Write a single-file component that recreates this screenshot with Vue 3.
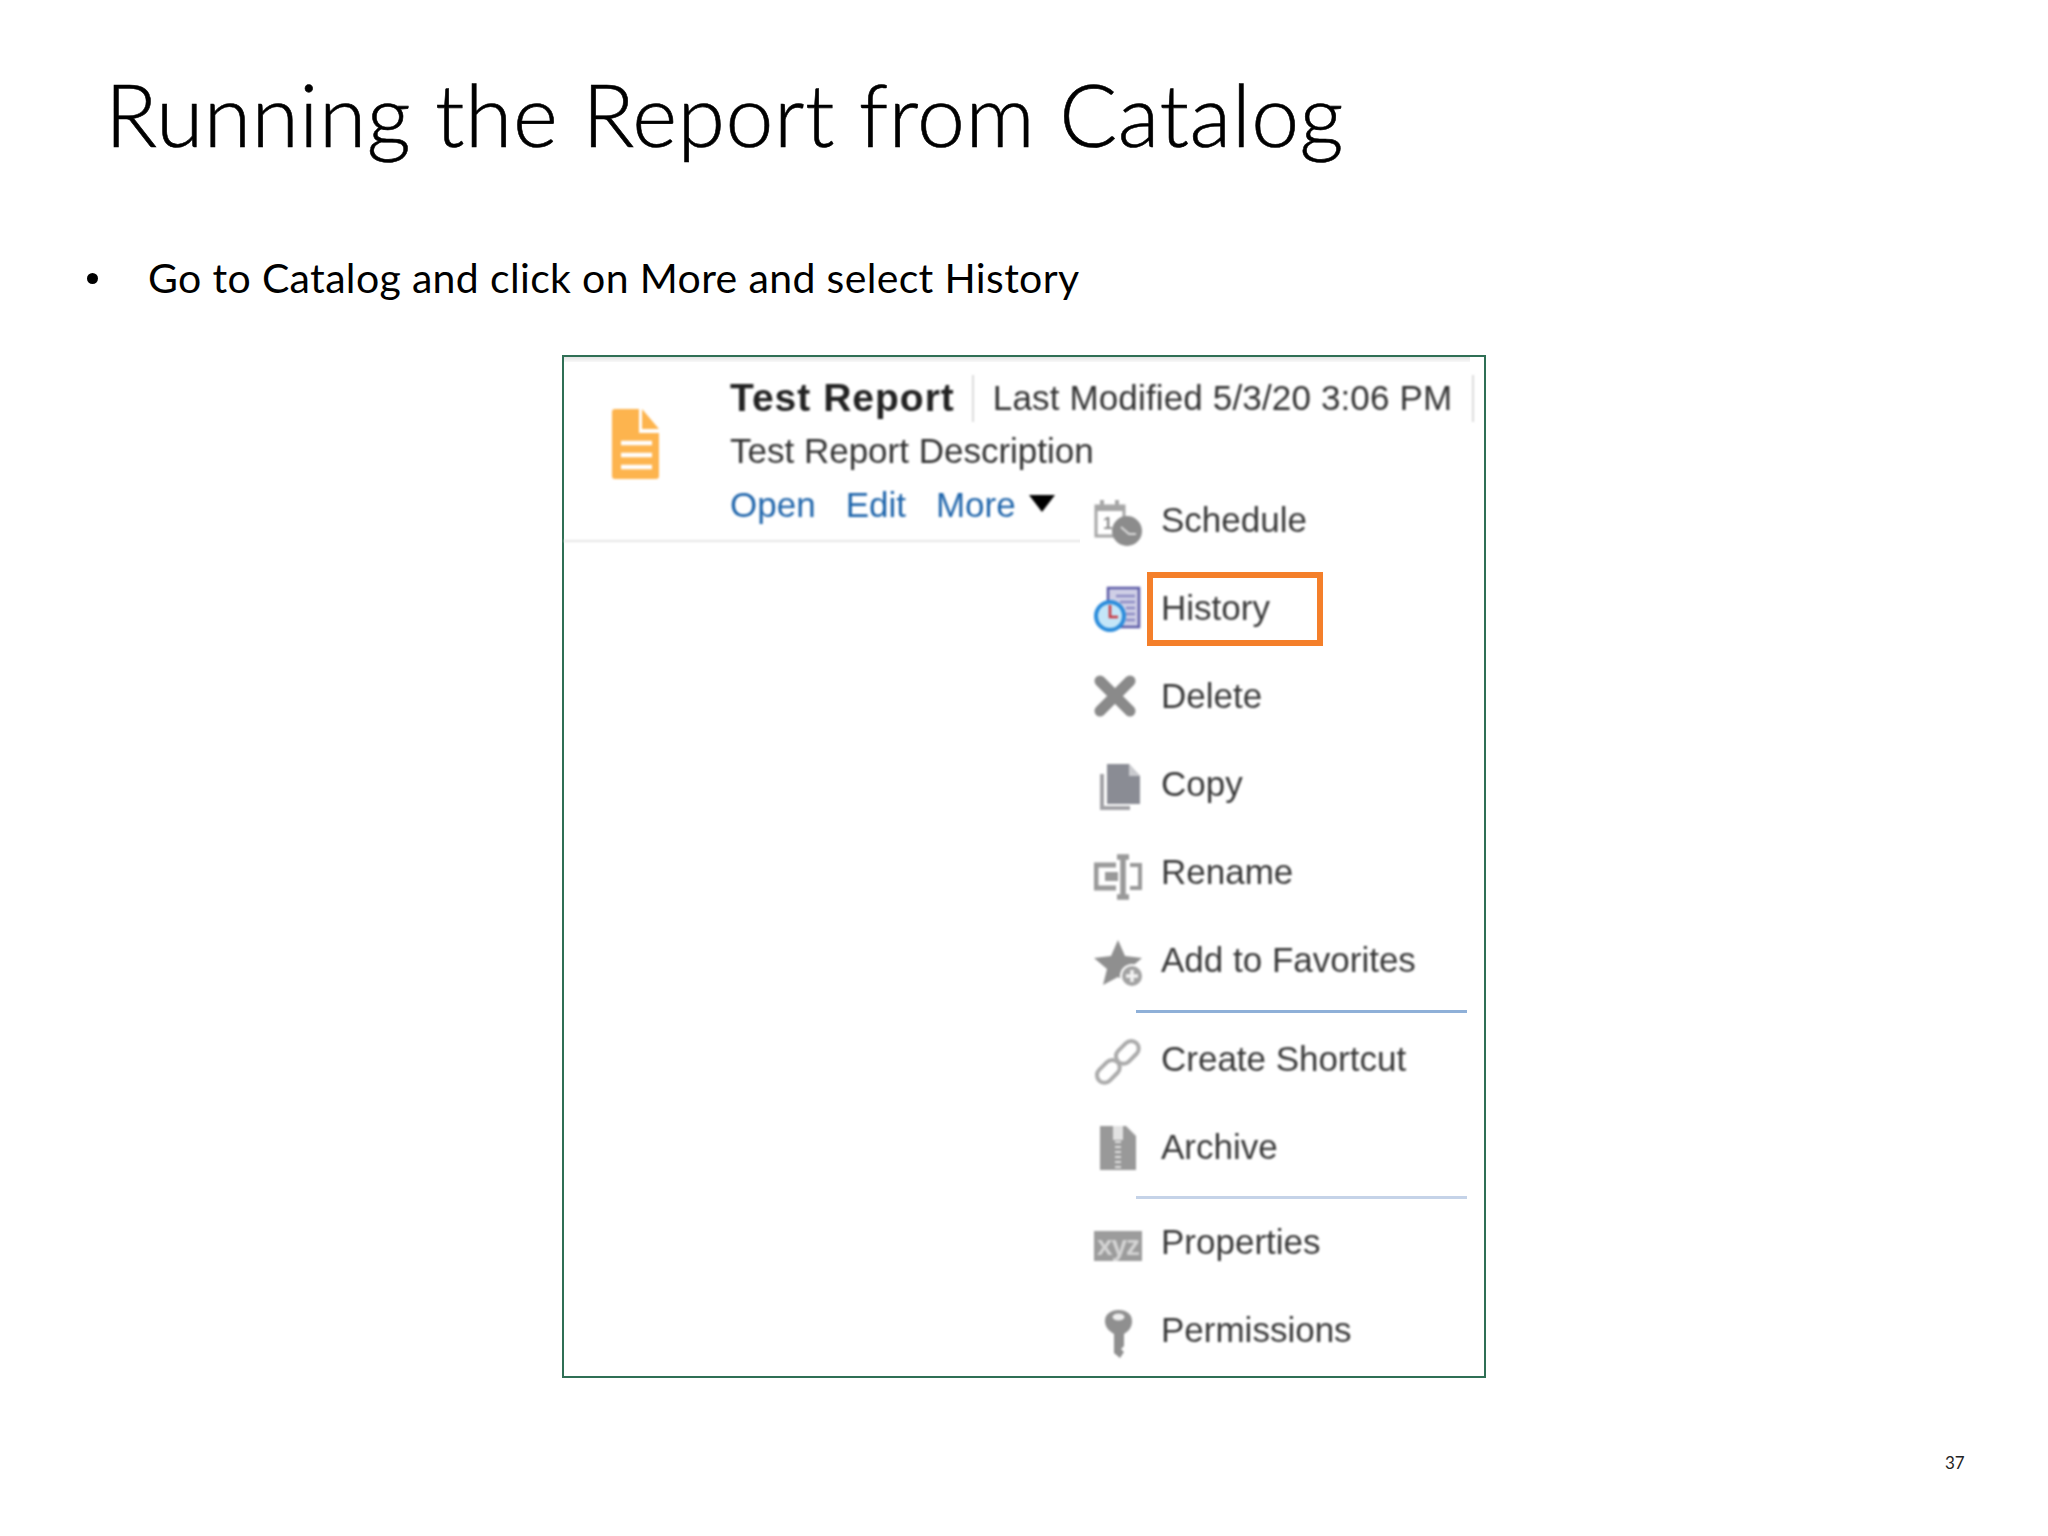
<script setup>
const actions = ['Open', 'Edit', 'More']
</script>

<template>
  <div class="slide">
    <h1 class="title">Running the Report from Catalog</h1>

    <ul class="bullets">
      <li>Go to Catalog and click on More and select History</li>
    </ul>

    <div class="shot">
      <div class="shot-inner">
        <div class="top-shade"></div>

        <div class="report">
          <svg class="doc-icon" viewBox="0 0 47 70">
            <path d="M3 0H27V24H47V67a3 3 0 0 1-3 3H3a3 3 0 0 1-3-3V3a3 3 0 0 1 3-3z" fill="#fdb44e" />
            <path d="M30 0 47 20H30z" fill="#fdb44e" />
            <path d="M9 34H40M9 46H40M9 58H40" stroke="#fff" stroke-width="4.5" />
          </svg>
          <div class="report-text">
            <div class="report-head">
              <span class="report-name">Test Report</span>
              <span class="report-sep"></span>
              <span class="report-date">Last Modified 5/3/20 3:06 PM</span>
              <span class="report-sep end"></span>
            </div>
            <div class="report-desc">Test Report Description</div>
            <div class="report-links">
              <a v-for="a in actions" :key="a">{{ a }}</a>
              <svg class="caret" viewBox="0 0 26 17"><path d="M0 0H26L13 17z" fill="#000" /></svg>
            </div>
          </div>
        </div>

        <!-- open "More" menu, sits over the divider line -->
        <div class="menu">
          <div class="menu-row">
            <svg class="ico" viewBox="0 0 48 56">
              <path d="M2 14H30V44H2z" fill="#fff" stroke="#a6a6a6" stroke-width="3" />
              <path d="M2 14H30V19H2z" fill="#a6a6a6" />
              <path d="M8 8V17M23 8V17" stroke="#a6a6a6" stroke-width="4" />
              <text x="9" y="37" class="ico-num">1</text>
              <circle cx="33" cy="39" r="15" fill="#8c8c8c" />
              <path d="M27 35 35 42H42" fill="none" stroke="#dcdcdc" stroke-width="2" />
            </svg>
            <span>Schedule</span>
          </div>

          <div class="menu-row">
            <svg class="ico" viewBox="0 0 48 56">
              <path d="M14 8H45V47H14z" fill="#cfcfe6" stroke="#5b5aa6" stroke-width="2.5" />
              <path d="M22 16H41M26 22H41M32 28H41M32 34H41M32 40H41" stroke="#8d8cc4" stroke-width="2.5" />
              <circle cx="16" cy="36" r="14" fill="#c4e6f8" stroke="#2b8cdb" stroke-width="4" />
              <path d="M16 25V37H24" fill="none" stroke="#c8343c" stroke-width="2.5" />
            </svg>
            <span>History</span>
            <div class="highlight"></div>
          </div>

          <div class="menu-row">
            <svg class="ico" viewBox="0 0 48 56">
              <path d="M6 13 36 43M36 13 6 43" stroke="#8a8a8a" stroke-width="11" stroke-linecap="round" />
            </svg>
            <span>Delete</span>
          </div>

          <div class="menu-row">
            <svg class="ico" viewBox="0 0 48 56">
              <path d="M8 18V52H36" fill="none" stroke="#a2a2a6" stroke-width="4" />
              <path d="M13 8H35L46 20V48H13z" fill="#8a8c94" />
              <path d="M35 8 46 20H35z" fill="#c9cace" />
            </svg>
            <span>Copy</span>
          </div>

          <div class="menu-row">
            <svg class="ico" viewBox="0 0 48 56">
              <path d="M22 21H2V44H22" fill="none" stroke="#999" stroke-width="5" />
              <path d="M11 28H24V37H11z" fill="#999" />
              <path d="M36 21H46V44H36" fill="none" stroke="#999" stroke-width="4" />
              <path d="M29 13V53M23 13H35M23 53H35" stroke="#999" stroke-width="5.5" />
            </svg>
            <span>Rename</span>
          </div>

          <div class="menu-row">
            <svg class="ico" viewBox="0 0 48 56">
              <path d="M24 8 31 24 48 26 35 37 39 54 24 45 9 53 13 37 0 26 17 24z" fill="#8f8f8f" />
              <circle cx="38" cy="44" r="11" fill="#a2a2a2" stroke="#fff" stroke-width="2" />
              <path d="M38 38V50M32 44H44" stroke="#f2f2f2" stroke-width="3.5" />
            </svg>
            <span>Add to Favorites</span>
          </div>

          <div class="menu-sep first"></div>

          <div class="menu-row">
            <svg class="ico" viewBox="0 0 48 56">
              <g fill="none" stroke="#ababab" stroke-width="4">
                <rect x="1" y="33" width="26" height="15" rx="7.5" transform="rotate(-45 14 40)" />
                <rect x="20" y="14" width="26" height="15" rx="7.5" transform="rotate(-45 33 21)" />
              </g>
            </svg>
            <span>Create Shortcut</span>
          </div>

          <div class="menu-row">
            <svg class="ico" viewBox="0 0 48 56">
              <path d="M6 7H32L42 17V51H6z" fill="#999" />
              <path d="M19 7H29V21H19z" fill="#e2e2e2" />
              <path d="M24 22V51" stroke="#e2e2e2" stroke-width="6" stroke-dasharray="2 3" />
            </svg>
            <span>Archive</span>
          </div>

          <div class="menu-sep second"></div>

          <div class="menu-row">
            <svg class="ico" viewBox="0 0 48 56">
              <rect y="17" width="48" height="30" fill="#9c9c9c" />
              <text x="24" y="41" text-anchor="middle" class="ico-xyz">xyz</text>
            </svg>
            <span>Properties</span>
          </div>

          <div class="menu-row">
            <svg class="ico" viewBox="0 0 48 56">
              <path d="M24.5 8c8 0 13.5 4 13.5 11 0 6-3 10-8 13V44L27 47 30 50 26 56 20 51V32C15 29 11 25 11 19 11 12 17 8 24.5 8z" fill="#8f8f8f" />
              <ellipse cx="24.5" cy="15" rx="6" ry="3.5" fill="#eee" />
            </svg>
            <span>Permissions</span>
          </div>
        </div>
      </div>
    </div>

    <div class="page-num">37</div>
  </div>
</template>

<style scoped>
.slide {
  width: 2048px;
  height: 1536px;
  box-sizing: border-box;
  display: flex;
  flex-direction: column;
  background: #fff;
  color: #000;
  font-family: Lato, "Open Sans", sans-serif;
  overflow: hidden;
}

.title {
  margin: 64px 0 0 105px;
  font-size: 86px;
  letter-spacing: 0.52px;
  line-height: 100px;
  font-weight: 300;
  -webkit-text-stroke: 0.6px #000;
}

.bullets {
  list-style: none;
  margin: 89px 0 0;
  padding: 0 0 0 148px;
  font-size: 41px;
  letter-spacing: 0.35px;
  line-height: 50px;
  position: relative;
}

.bullets li::before {
  content: "";
  position: absolute;
  left: 87px;
  top: 20px;
  width: 11px;
  height: 11px;
  border-radius: 50%;
  background: #000;
}

.shot {
  margin: 52px 0 0 562px;
  width: 924px;
  height: 1023px;
  box-sizing: border-box;
  border: 2px solid #2f6f55;
  flex: none;
}

.shot-inner {
  position: relative;
  height: 100%;
  font-family: "Liberation Sans", Arial, sans-serif;
  font-size: 35px;
  line-height: 52px;
  color: #333;
}

.top-shade {
  height: 5px;
  margin-right: 14px;
  background: linear-gradient(#e4e4e4, #f8f8f8);
}

.report {
  display: flex;
  align-items: flex-start;
  height: 180px;
  box-sizing: border-box;
  padding: 11px 0 0 48px;
  margin-right: 14px;
  border-bottom: 2px solid #e6e6e6;
  filter: blur(0.9px);
}

.doc-icon {
  width: 47px;
  height: 70px;
  margin-top: 36px;
  flex: none;
}

.report-text {
  margin-left: 71px;
}

.report-head {
  display: flex;
  align-items: center;
  white-space: nowrap;
  margin-top: -1px;
}

.report-name {
  font-size: 39px;
  letter-spacing: 1px;
  font-weight: 700;
  color: #222;
}

.report-sep {
  width: 2px;
  height: 47px;
  margin: 0 19px 0 17px;
  background: #dcdcdc;
}

.report-sep.end {
  margin: 0 0 0 20px;
}

.report-date {
  letter-spacing: 0.15px;
}

.report-desc {
  white-space: nowrap;
  margin-top: 1px;
}

.report-links {
  display: flex;
  align-items: center;
  gap: 30px;
  margin-top: 2px;
  color: #1f65ab;
}

.caret {
  width: 26px;
  height: 17px;
  margin-left: -17px;
  margin-top: -4px;
}

.menu {
  position: absolute;
  left: 516px;
  top: 121px;
  width: 392px;
  box-sizing: border-box;
  padding-left: 14px;
  background: #fff;
  display: flex;
  flex-direction: column;
  gap: 4px;
  color: #383838;
}

.menu-row {
  position: relative;
  display: flex;
  align-items: center;
  height: 84px;
  line-height: 84px;
  gap: 19px;
}

.menu-row span,
.ico {
  filter: blur(0.9px);
}

.ico {
  width: 48px;
  height: 56px;
  flex: none;
}

.ico-num {
  font-size: 17px;
  font-weight: 700;
  fill: #8a8a8a;
}

.ico-xyz {
  font-size: 28px;
  font-weight: 700;
  letter-spacing: -1px;
  fill: #d4d4d4;
}

.highlight {
  position: absolute;
  left: 53px;
  top: 6px;
  width: 176px;
  height: 74px;
  box-sizing: border-box;
  border: 6px solid #f47f2a;
}

.menu-sep {
  margin-left: 42px;
  width: 331px;
  height: 3px;
  filter: blur(0.5px);
}

.menu-sep.first {
  margin-top: 4px;
  background: #8fb0d8;
}

.menu-sep.second {
  margin-top: 3px;
  margin-bottom: -3px;
  background: #c5d3e8;
}

.page-num {
  margin: 75px 0 0 1945px;
  font-size: 17px;
  line-height: 20px;
  color: #222;
}
</style>
